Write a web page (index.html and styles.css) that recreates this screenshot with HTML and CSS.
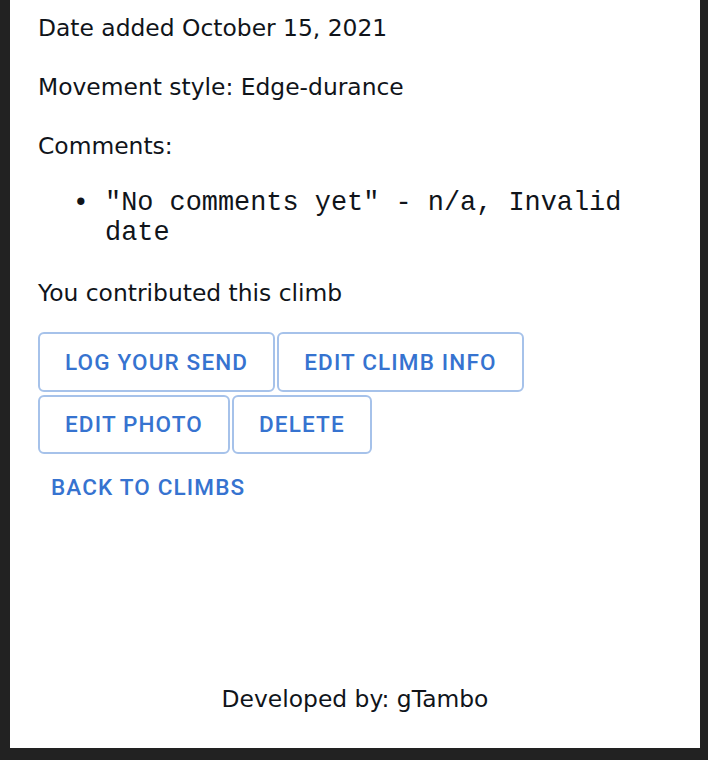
FILE: index.html
```html
<!DOCTYPE html>
<html lang="en">
<head>
<meta charset="utf-8">
<title>Climb</title>
<link rel="stylesheet" href="styles.css">
</head>
<body>
<div class="page">
  <main class="content">
    <p class="line">Date added October 15, 2021</p>
    <p class="line">Movement style: Edge-durance</p>
    <p class="line">Comments:</p>
    <ul class="comments">
      <li>"No comments yet" - n/a, Invalid date</li>
    </ul>
    <p class="line">You contributed this climb</p>
    <div class="actions">
      <div class="row">
        <button class="btn">Log your send</button>
        <button class="btn">Edit climb info</button>
      </div>
      <div class="row">
        <button class="btn">Edit photo</button>
        <button class="btn">Delete</button>
      </div>
      <div class="row">
        <button class="btn-text">Back to climbs</button>
      </div>
    </div>
  </main>
  <footer class="footer">Developed by: gTambo</footer>
</div>
</body>
</html>
```
FILE: styles.css
```css
html, body {
  margin: 0;
  padding: 0;
  background: #222222;
}
.page {
  margin-left: 10px;
  width: 690px;
  height: 748px;
  background: #ffffff;
  display: flex;
  flex-direction: column;
  font-family: "DejaVu Sans", sans-serif;
  color: #10141a;
}
.content {
  flex: 1;
  padding: 0 0 0 28px;
}
.line {
  font-size: 23.4px;
  line-height: 28px;
  margin: 14px 0 31px;
}
.comments {
  font-family: "Liberation Mono", monospace;
  font-size: 26.9px;
  line-height: 30px;
  margin: -3px 0 31px;
  padding-left: 67px;
  width: 560px;
}
.comments li::marker {
  content: "\2022  ";
}
.actions {
  display: flex;
  flex-direction: column;
  gap: 3px;
  margin-top: -6px;
}
.row {
  display: flex;
  gap: 2px;
}
.btn, .btn-text {
  font-family: Roboto, sans-serif;
  font-weight: 500;
  font-size: 22.5px;
  letter-spacing: 1.15px;
  text-transform: uppercase;
  color: #3673d0;
  background: #fff;
  cursor: pointer;
}
.btn {
  height: 59.5px;
  padding: 0 25px;
  border: 2px solid #a6c2ea;
  border-radius: 6px;
}
.btn-text {
  height: 60px;
  padding: 0 13px;
  border: none;
}
.footer {
  text-align: center;
  font-size: 23.4px;
  line-height: 28px;
  padding-bottom: 35px;
}
```
